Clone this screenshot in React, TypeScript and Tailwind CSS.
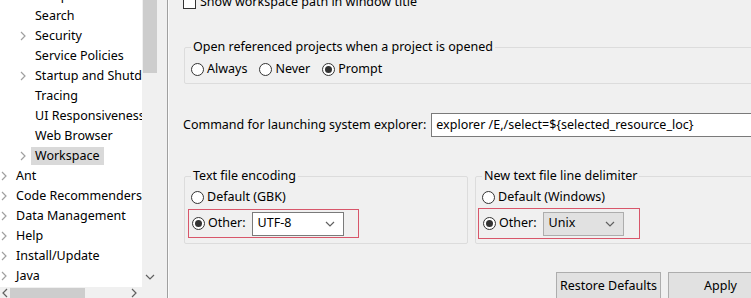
import { ReactNode } from "react";

const TREE = [
  { name: "Perspectives", level: 1, kids: false },
  { name: "Search", level: 1, kids: false },
  { name: "Security", level: 1, kids: true },
  { name: "Service Policies", level: 1, kids: false },
  { name: "Startup and Shutdown", level: 1, kids: true },
  { name: "Tracing", level: 1, kids: false },
  { name: "UI Responsiveness Monitoring", level: 1, kids: false },
  { name: "Web Browser", level: 1, kids: false },
  { name: "Workspace", level: 1, kids: true, selected: true },
  { name: "Ant", level: 0, kids: true },
  { name: "Code Recommenders", level: 0, kids: true },
  { name: "Data Management", level: 0, kids: true },
  { name: "Help", level: 0, kids: true },
  { name: "Install/Update", level: 0, kids: true },
  { name: "Java", level: 0, kids: true },
  { name: "Maven", level: 0, kids: true },
];

const Chevron = ({ dir = "right", className = "" }: { dir?: "right" | "down" | "left"; className?: string }) => {
  const d = dir === "right" ? "M2 1 L6 5 L2 9" : dir === "left" ? "M6 1 L2 5 L6 9" : "M1 2 L5 6 L9 2";
  const w = dir === "down" ? 10 : 8;
  const h = dir === "down" ? 8 : 10;
  return (
    <svg width={w} height={h} viewBox={`0 0 ${w} ${h}`} className={className}>
      <path d={d} fill="none" stroke="currentColor" strokeWidth="1.2" />
    </svg>
  );
};

const Radio = ({ checked, label }: { checked?: boolean; label: string }) => (
  <span className="flex items-center gap-[3px]">
    <span className="flex h-[13px] w-[13px] items-center justify-center rounded-full border border-[#333] bg-white">
      {checked && <span className="h-[7px] w-[7px] rounded-full bg-[#333]" />}
    </span>
    <span>{label}</span>
  </span>
);

const Group = ({ title, className = "", children }: { title: string; className?: string; children: ReactNode }) => (
  <fieldset className={"rounded-[2px] border border-[#dcdcdc] px-[6px] " + className}>
    <legend className="px-[2px] leading-[16px]">{title}</legend>
    {children}
  </fieldset>
);

const Combo = ({ value, gray, w }: { value: string; gray?: boolean; w: string }) => (
  <div
    className={
      "flex h-[24px] items-center justify-between border pl-[5px] pr-[8px] " +
      w +
      (gray ? " border-[#adadad] bg-[#e1e1e1]" : " border-[#7a7a7a] bg-white")
    }
  >
    <span>{value}</span>
    <Chevron dir="down" className="text-[#606060]" />
  </div>
);

export default function App() {
  return (
    <div className="flex h-[298px] w-[751px] overflow-hidden bg-[#f0f0f0] font-['Noto_Sans',sans-serif] text-[12.5px] text-black">
      {/* left tree */}
      <div className="flex w-[158px] shrink-0 flex-col">
        <div className="flex h-[287px]">
          <div className="w-[142px] overflow-hidden bg-white">
            <ul className="-mt-[14px]">
              {TREE.map((t) => (
                <li
                  key={t.name}
                  className={"flex h-[20px] items-center whitespace-nowrap " + (t.level ? "pl-[19px]" : "pl-0")}
                >
                  <span className="flex w-[15px] shrink-0 items-center text-[#a0a0a0]">
                    {t.kids && <Chevron />}
                  </span>
                  <span className={"px-[1px] " + (t.selected ? "-ml-[3px] bg-[#d9d9d9] pl-[4px] pr-[4px]" : "")}>
                    {t.name}
                  </span>
                </li>
              ))}
            </ul>
          </div>
          <div className="flex w-[16px] flex-col bg-[#f0f0f0]">
            <div className="mx-[1px] h-[73px] bg-[#cdcdcd]" />
            <div className="flex-1" />
            <div className="flex h-[16px] items-center justify-center pb-[4px] text-[#606060]">
              <Chevron dir="down" />
            </div>
          </div>
        </div>
        <div className="flex h-[11px] items-start bg-[#f0f0f0]">
          <div className="flex w-[142px] items-center">
            <span className="flex w-[10px] justify-center text-[#606060]">
              <Chevron dir="left" />
            </span>
            <div className="mt-[1px] h-[10px] w-[75px] bg-[#cdcdcd]" />
            <div className="flex-1" />
            <span className="flex w-[16px] justify-center text-[#606060]">
              <Chevron />
            </span>
          </div>
        </div>
      </div>

      {/* splitter */}
      <div className="w-[9px] shrink-0 bg-[#f0f0f0]" />
      <div className="w-[2px] shrink-0 border-l border-[#a0a0a0] bg-[#fbfbfb]" />

      {/* right page */}
      <div className="w-[620px] shrink-0 pl-[14px]">
        <div className="-mt-[8px] flex h-[20px] items-center gap-[4px]">
          <span className="h-[13px] w-[13px] border border-[#333] bg-white" />
          <span>Show workspace path in window title</span>
        </div>

        <Group title="Open referenced projects when a project is opened" className="ml-[1px] mt-[27px] h-[45px]">
          <div className="mt-[4px] flex h-[20px] items-center gap-[12px]">
            <Radio label="Always" />
            <Radio label="Never" />
            <Radio checked label="Prompt" />
          </div>
        </Group>

        <div className="mt-[29px] flex h-[24px] items-center gap-[5px]">
          <span>Command for launching system explorer:</span>
          <div className="flex h-[24px] flex-1 items-center border border-[#7a7a7a] bg-white pl-[4px]">
            explorer /E,/select=${"{"}selected_resource_loc{"}"}
          </div>
        </div>

        <div className="mt-[31px] flex gap-[7px]">
          <Group title="Text file encoding" className="ml-[1px] h-[76px] w-[284px]">
            <div className="mt-[2px] flex h-[22px] items-center">
              <Radio label="Default (GBK)" />
            </div>
            <div className="-ml-[3px] mt-[1px] flex h-[29px] w-[171px] items-center gap-[6px] border border-[#d8566a] pl-[3px]">
              <Radio checked label="Other:" />
              <Combo value="UTF-8" w="w-[92px]" />
            </div>
          </Group>
          <Group title="New text file line delimiter" className="h-[76px] flex-1">
            <div className="mt-[2px] flex h-[22px] items-center">
              <Radio label="Default (Windows)" />
            </div>
            <div className="-ml-[4px] flex h-[31px] w-[162px] items-center gap-[6px] border border-[#d8566a] pl-[4px]">
              <Radio checked label="Other:" />
              <Combo value="Unix" gray w="w-[81px]" />
            </div>
          </Group>
        </div>

        <div className="mt-[28px] flex gap-[7px] pl-[373px]">
          <button className="h-[28px] w-[105px] border border-[#adadad] bg-[#e1e1e1]">Restore Defaults</button>
          <button className="h-[28px] w-[105px] border border-[#adadad] bg-[#e1e1e1]">Apply</button>
        </div>
      </div>
    </div>
  );
}
